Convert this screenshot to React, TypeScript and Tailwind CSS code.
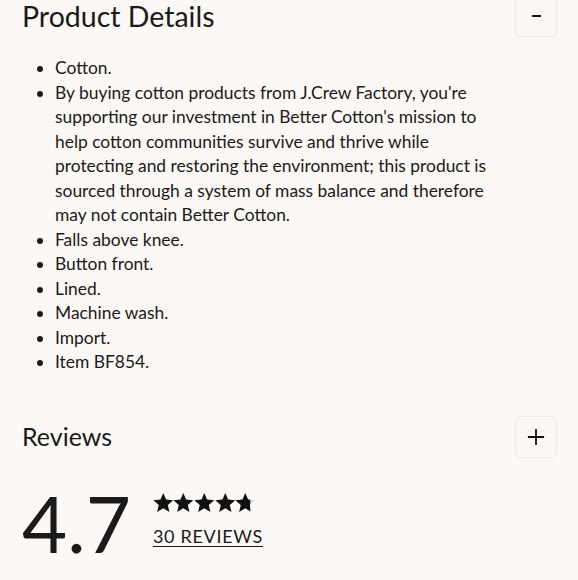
const items = [
  "Cotton.",
  null,
  "Falls above knee.",
  "Button front.",
  "Lined.",
  "Machine wash.",
  "Import.",
  "Item BF854.",
];

const starPath = "M12 1l3.1 7.3 7.9.7-6 5.2 1.8 7.8L12 17.9 5.2 22l1.8-7.8-6-5.2 7.9-.7z";

function Star({ clip }: { clip?: boolean }) {
  return (
    <svg viewBox="1 1 22 21" className="h-[19px] w-[20.6px]">
      <defs>
        <clipPath id="part">
          <rect x="0" y="0" width="17.5" height="24" />
        </clipPath>
      </defs>
      {clip ? <path d={starPath} fill="#dcdcdc" /> : null}
      <path d={starPath} fill="#111" clipPath={clip ? "url(#part)" : undefined} />
    </svg>
  );
}

export default function App() {
  return (
    <div className="min-h-[580px] w-[578px] overflow-hidden bg-[#fbf8f5] pl-[22px] pr-[21px] font-['Lato',sans-serif] text-[#1a1a1a]">
      <div className="-mt-[5px] flex h-[42px] items-center justify-between">
        <h2 className="text-[28.5px] leading-none font-normal">Product Details</h2>
        <button className="flex h-[42px] w-[42px] items-center justify-center rounded-[5px] border border-[#ececec] bg-[#fbf8f5]">
          <span className="block h-[2px] w-[9px] bg-[#111]" />
        </button>
      </div>

      <ul className="mt-[19px] list-disc pl-[33px] text-[17.4px] leading-[24.5px]">
        {items.map((t, i) =>
          t ? (
            <li key={i}>{t}</li>
          ) : (
            <li key={i}>
              By buying cotton products from J.Crew Factory, you're
              <br />
              supporting our investment in Better Cotton's mission to
              <br />
              help cotton communities survive and thrive while
              <br />
              protecting and restoring the environment; this product is
              <br />
              sourced through a system of mass balance and therefore
              <br />
              may not contain Better Cotton.
            </li>
          ),
        )}
      </ul>

      <div className="mt-[41px] flex h-[42px] items-center justify-between">
        <h2 className="text-[25px] leading-none font-normal">Reviews</h2>
        <button className="flex h-[42px] w-[42px] items-center justify-center rounded-[5px] border border-[#ececec] bg-[#fbf8f5]">
          <svg viewBox="0 0 20 20" className="h-[18px] w-[18px]">
            <path d="M10 1v18M1 10h18" stroke="#111" strokeWidth="2" />
          </svg>
        </button>
      </div>

      <div className="mt-[30px] flex items-start gap-[22px]">
        <div className="text-[78px] leading-[70px] font-normal">4.7</div>
        <div className="flex flex-col pt-[5px]">
          <div className="flex">
            <Star />
            <Star />
            <Star />
            <Star />
            <Star clip />
          </div>
          <a className="mt-[13px] text-[18px] leading-[22px] tracking-[0.7px] underline underline-offset-[3px]">
            30 REVIEWS
          </a>
        </div>
      </div>
    </div>
  );
}
